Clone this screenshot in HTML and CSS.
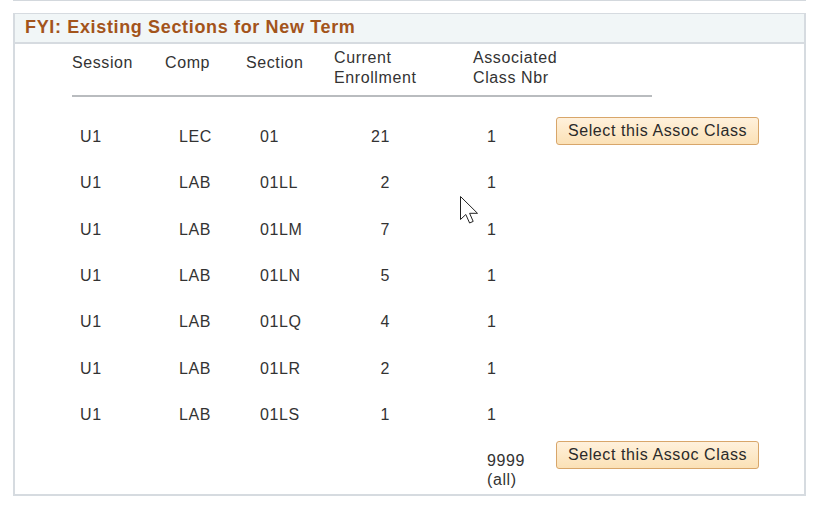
FILE: index.html
```html
<!DOCTYPE html>
<html>
<head>
<meta charset="utf-8">
<link rel="stylesheet" href="styles.css">
</head>
<body>
<div class="topline"></div>
<div class="panel">
  <div class="panel-head">FYI: Existing Sections for New Term</div>
  <div class="table">
    <div class="thead">
      <div class="th single">Session</div>
      <div class="th single">Comp</div>
      <div class="th single">Section</div>
      <div class="th">Current<br>Enrollment</div>
      <div class="th">Associated<br>Class Nbr</div>
    </div>
    <div class="row">
      <div class="c1">U1</div><div class="c2">LEC</div><div class="c3">01</div><div class="c4">21</div><div class="c5">1</div>
      <div class="c6"><button class="btn">Select this Assoc Class</button></div>
    </div>
    <div class="row">
      <div class="c1">U1</div><div class="c2">LAB</div><div class="c3">01LL</div><div class="c4">2</div><div class="c5">1</div><div class="c6"></div>
    </div>
    <div class="row">
      <div class="c1">U1</div><div class="c2">LAB</div><div class="c3">01LM</div><div class="c4">7</div><div class="c5">1</div><div class="c6"></div>
    </div>
    <div class="row">
      <div class="c1">U1</div><div class="c2">LAB</div><div class="c3">01LN</div><div class="c4">5</div><div class="c5">1</div><div class="c6"></div>
    </div>
    <div class="row">
      <div class="c1">U1</div><div class="c2">LAB</div><div class="c3">01LQ</div><div class="c4">4</div><div class="c5">1</div><div class="c6"></div>
    </div>
    <div class="row">
      <div class="c1">U1</div><div class="c2">LAB</div><div class="c3">01LR</div><div class="c4">2</div><div class="c5">1</div><div class="c6"></div>
    </div>
    <div class="row">
      <div class="c1">U1</div><div class="c2">LAB</div><div class="c3">01LS</div><div class="c4">1</div><div class="c5">1</div><div class="c6"></div>
    </div>
    <div class="row last">
      <div class="c1"></div><div class="c2"></div><div class="c3"></div><div class="c4"></div><div class="c5">9999<br>(all)</div>
      <div class="c6"><button class="btn">Select this Assoc Class</button></div>
    </div>
  </div>
</div>
<svg class="cursor" width="20" height="30" viewBox="0 0 20 30">
  <path d="M1.5 1.5 L1.5 24.5 L6.8 19.5 L10.6 28 L14.2 26.4 L10.6 18.3 L18.5 18.3 Z" fill="#fff" stroke="#222" stroke-width="1" stroke-linejoin="miter"/>
</svg>
</body>
</html>
```
FILE: styles.css
```css
html, body {
  margin: 0;
  padding: 0;
  background: #fff;
}
body {
  font-family: "Liberation Sans", Arial, sans-serif;
  font-size: 16px;
  letter-spacing: 0.6px;
  color: #333;
  position: relative;
  width: 827px;
  height: 507px;
  overflow: hidden;
}
.topline {
  margin-left: 13px;
  width: 793px;
  height: 1px;
  background: #d3d8dd;
}
.panel {
  margin-top: 12px;
  margin-left: 13px;
  width: 789px;
  height: 480px;
  border: 2px solid #d6dbe0;
  border-top: 1px solid #d6dbe0;
  box-sizing: content-box;
}
.panel-head {
  height: 28px;
  background: #f1f6f7;
  border-bottom: 2px solid #d6dbe0;
  color: #a3541b;
  font-weight: bold;
  font-size: 18px;
  letter-spacing: 0.65px;
  line-height: 27px;
  padding-left: 10px;
}
.table {
  margin-left: 57px;
}
.thead {
  display: grid;
  grid-template-columns: 93px 81px 88px 139px 179px;
  width: 580px;
  padding-top: 4px;
  padding-bottom: 8px;
  border-bottom: 2px solid #b9bcbf;
  line-height: 19.5px;
}
.th.single {
  padding-top: 5px;
}
.row {
  display: grid;
  grid-template-columns: 93px 81px 88px 139px 83px 1fr;
  align-items: start;
  height: 46.33px;
  line-height: 19px;
}
.thead + .row {
  margin-top: 16px;
}
.row > div {
  padding-top: 14px;
}
.row > .c6 {
  padding-top: 4px;
}
.c1 { padding-left: 8px; }
.c2 { padding-left: 14px; }
.c3 { padding-left: 14px; }
.c4 { text-align: right; padding-right: 83px; }
.c5 { padding-left: 14px; }
.row.last {
  height: auto;
}
.btn {
  width: 203px;
  height: 28px;
  padding: 0;
  font-family: "Liberation Sans", Arial, sans-serif;
  font-size: 16px;
  letter-spacing: 0.6px;
  color: #2a2a2a;
  background: linear-gradient(#fff1dc, #fbe1b6);
  border: 1px solid #d8a66a;
  border-radius: 3px;
  line-height: 24px;
}
.cursor {
  position: absolute;
  left: 459px;
  top: 195px;
}
```
